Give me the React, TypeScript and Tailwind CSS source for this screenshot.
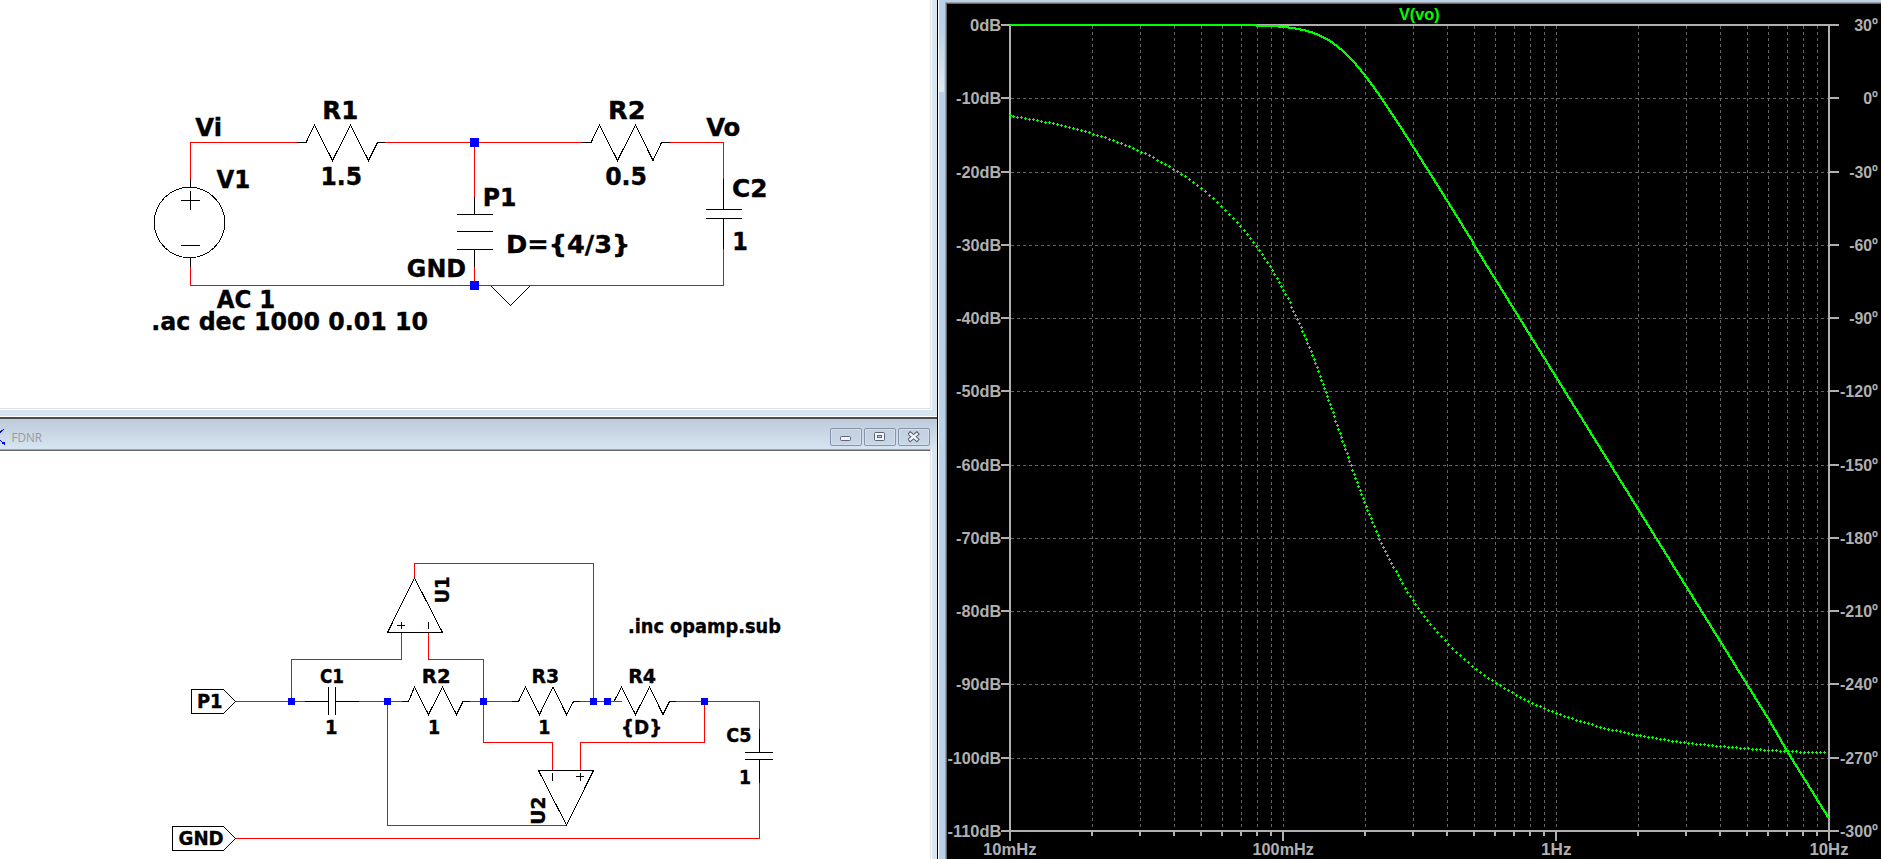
import React from "react";

type Pt = [number, number];

const SCHEMATIC_FONT = '"DejaVu Sans Condensed", "DejaVu Sans", sans-serif';
const PLOT_FONT = '"Liberation Sans", Arial, sans-serif';

let ctx: CanvasRenderingContext2D | null = null;

/** Fits a label so that its ink covers the span from x to x + w. */
function fit(text: string, font: string, x: number, w: number) {
  ctx = ctx || document.createElement("canvas").getContext("2d");
  if (!ctx) return { x, length: w };
  ctx.font = font;
  const m = ctx.measureText(text);
  const k = w / (m.actualBoundingBoxLeft + m.actualBoundingBoxRight);
  return { x: x + m.actualBoundingBoxLeft * k, length: m.width * k };
}

interface LabelProps {
  t: string;
  x: number;
  r: number;
  y: number;
  size: number;
  family?: string;
  weight?: string;
  fill?: string;
}

function Label({ t, x, r, y, size, family = SCHEMATIC_FONT, weight = "bold", fill = "#000" }: LabelProps) {
  const schematic = family === SCHEMATIC_FONT;
  const f = fit(t, `${schematic ? "condensed " : ""}${weight} ${size}px ${family}`, x, r - x);
  return (
    <text
      x={f.x}
      y={schematic ? y - 1 : y}
      textLength={f.length}
      lengthAdjust="spacingAndGlyphs"
      fontFamily={family}
      fontStretch={schematic ? "condensed" : "normal"}
      fontWeight={weight}
      fontSize={size}
      fill={fill}
      stroke={schematic ? fill : "none"}
      strokeWidth={0.35}
    >
      {t}
    </text>
  );
}

function UpLabel({ t, x, top, bottom, size }: { t: string; x: number; top: number; bottom: number; size: number }) {
  return (
    <g transform={`translate(${x} ${bottom}) rotate(-90)`}>
      <Label t={t} x={0} r={bottom - top} y={1} size={size} />
    </g>
  );
}

const Wire = ({ d }: { d: string }) => <path d={d} stroke="#ff0000" fill="none" shapeRendering="crispEdges" />;
const Part = ({ d }: { d: string }) => <path d={d} stroke="#000" fill="none" shapeRendering="crispEdges" />;
const Node = ({ x, y, s }: { x: number; y: number; s: number }) => (
  <rect x={x - s / 2} y={y - s / 2} width={s} height={s} fill="#0000ff" shapeRendering="crispEdges" />
);

function FilterSchematic() {
  return (
    <svg className="block" width="930" height="408" viewBox="0 0 930 408">
      <Wire d="M190.5 179V142.5H297M385 142.5H582M670 142.5H723.5V179M723.5 249V285.5H190.5V267M474.5 143V197M474.5 267V285" />
      <Part d="M190.5 179V187M190.5 258V267M181 200.5H200M190.5 191V210M181 245.5H200" />
      <circle cx="189.5" cy="222.5" r="35.2" fill="none" stroke="#000" shapeRendering="crispEdges" />
      <Part d="M297 142.5H306L314.5 125L332.5 160.5L350.5 125L368.5 160.5L377.5 142.5H385" />
      <Part d="M582 142.5H591L599.5 125L617.5 160.5L635.5 125L653 160.5L661.5 142.5H670" />
      <Part d="M474.5 197V214.5M457 214.5H493M457 231.5H493M457 249.5H493M474.5 249V267" />
      <Part d="M723.5 179V209.5M706 209.5H742M706 218.5H742M723.5 218V249" />
      <Part d="M491 286L510.5 305.5L530 286" />
      <Node x={474.5} y={142.5} s={9} />
      <Node x={474.5} y={285.5} s={9} />
      <Label t="Vi" x={195.3} r={220} y={137} size={25.5} />
      <Label t="R1" x={324.5} r={357.3} y={120} size={25.5} />
      <Label t="1.5" x={322.5} r={361} y={186} size={25.5} />
      <Label t="V1" x={216.5} r={249.3} y={189} size={25.5} />
      <Label t="AC 1" x={216.7} r={274.3} y={309} size={25.5} />
      <Label t=".ac dec 1000 0.01 10" x={153.4} r={427} y={331} size={25.5} />
      <Label t="GND" x={407.9} r={465} y={278} size={25.5} />
      <Label t="P1" x={484.9} r={515.5} y={207} size={25.5} />
      <Label t="D={4/3}" x={508.2} r={627.7} y={254} size={25.5} />
      <Label t="R2" x={610.2} r={643.3} y={120} size={25.5} />
      <Label t="0.5" x={606.2} r={646} y={186} size={25.5} />
      <Label t="Vo" x={706.2} r={739.5} y={137} size={25.5} />
      <Label t="C2" x={733} r={765.3} y={198} size={25.5} />
      <Label t="1" x={734.3} r={747} y={251} size={25.5} />
    </svg>
  );
}

function FdnrSchematic() {
  return (
    <svg className="block" width="930" height="408" viewBox="0 451 930 408">
      <Wire d="M236 701.5H305M359 701.5H402M470 701.5H512M580 701.5H600M676 701.5H759.5V729M759.5 783V838.5H235" />
      <Wire d="M414.5 578V563.5H593.5V701M401.5 633V659.5H291.5V701M428.5 633V659.5H483.5V742.5H552.5V770M704.5 701V742.5H580.5V770M566.5 825.5H387.5V701" />
      <Part d="M223.5 689.5H191.5V713.5H223.5L235.5 701.5ZM223.5 826.5H172.5V850.5H223.5L235.5 838.5Z" />
      <Part d="M305 701.5H328.5M328.5 687V715M335.5 687V715M335.5 701.5H359" />
      <Part d="M402 701.5H408.5L414.5 687L428.5 714.5L442.5 687L456.5 714.5L463 701.5H470" />
      <Part d="M512 701.5H518.5L525.5 687L539.5 714.5L553 687L566.5 714.5L573.5 701.5H580" />
      <Part d="M614 701.5L621.5 687L635.5 714.5L649.5 687L663 714.5L669.5 701.5H676" />
      <Wire d="M600 701.5H622" />
      <Part d="M759.5 729V752.5M745 752.5H773M745 759.5H773M759.5 759V783" />
      <Part d="M414.5 578L387.5 632.5H442.5ZM397 625.5H405M401.5 622V629M428.5 622V629" />
      <Part d="M538.5 770.5H593.5L566.5 825ZM552.5 773V781M576 776.5H584M580.5 773V781" />
      {[291.5, 387.5, 483.5, 593.5, 607.5, 704.5].map((x) => (
        <Node key={x} x={x} y={701.5} s={7} />
      ))}
      <Label t="P1" x={197.9} r={222} y={709} size={20} />
      <Label t="C1" x={319.9} r={343.5} y={683.5} size={20} />
      <Label t="1" x={327} r={337} y={734.5} size={20} />
      <Label t="R2" x={422.9} r={448.9} y={683.5} size={20} />
      <Label t="1" x={430} r={439.7} y={734.5} size={20} />
      <Label t="R3" x={532.5} r={558.5} y={683.5} size={20} />
      <Label t="1" x={540.2} r={549.9} y={734.5} size={20} />
      <Label t="R4" x={629.2} r={655.5} y={683.5} size={20} />
      <Label t="{D}" x={623} r={660.3} y={734.5} size={20} />
      <Label t="C5" x={726.3} r={751} y={743} size={20} />
      <Label t="1" x={741} r={750.6} y={784.5} size={20} />
      <Label t="GND" x={178.5} r={222.7} y={846} size={20} />
      <Label t=".inc opamp.sub" x={628.9} r={781} y={633.5} size={20} />
      <UpLabel t="U1" x={449} top={577} bottom={602.5} size={20} />
      <UpLabel t="U2" x={545} top={798} bottom={823.7} size={20} />
    </svg>
  );
}

const X0 = 1010;
const DECADE = 273.1;
const Y0 = 25;
const ROW = 73.27;
const toF = (x: number) => 0.01 * Math.pow(10, (x - X0) / DECADE);

function response(f: number) {
  const w = 2 * Math.PI * f;
  const re = 1 - 2 * w * w;
  const im = 2 * w - w * w * w;
  let phase = (-Math.atan2(im, re) * 180) / Math.PI;
  if (phase > 0) phase -= 360;
  return { db: -10 * Math.log10(re * re + im * im), phase };
}

/** Loss added by the finite op-amp gain near the top of the sweep, in pixels. */
function droop(f: number) {
  if (f < 0.5) return 0;
  if (f < 6) return 1;
  if (f < 7) return 1 + (f - 6) * 2;
  return 3.2;
}

const magnitudeY = (x: number) => {
  const f = toF(x);
  return Y0 - (response(f).db * ROW) / 10 + droop(f);
};
const phaseY = (x: number) => Math.min(752.5, Y0 + ((30 - response(toF(x)).phase) * ROW) / 30);

/** The trace as drawn by a square two-pixel pen, one step per pixel column. */
function magnitudePath() {
  let d = "";
  for (let x = 1011; x < 1829; x += 1) {
    const y = Math.round(magnitudeY(x));
    const next = Math.max(y + 1, Math.round(magnitudeY(x + 1)));
    d += `M${x - 1} ${y - 1}h2v${next - y + 1}h-2z`;
  }
  return d;
}

function phaseDots() {
  const dots: Pt[] = [];
  let lx = -99;
  let ly = -99;
  for (let x = X0; x <= 1827; x += 0.05) {
    const y = phaseY(x);
    if (Math.max(x - lx, Math.abs(y - ly)) >= 3.999) {
      dots.push([Math.floor(x), Math.floor(y)]);
      lx = x;
      ly = y;
    }
  }
  return dots.map(([x, y]) => `M${x - 1} ${y}h3v1h-3zM${x} ${y - 1}h1v3h-1z`).join("");
}

const GRID_X = [
  1092, 1140, 1174, 1201, 1222, 1241, 1257, 1271, 1283,
  1365, 1413, 1447, 1474, 1495, 1514, 1530, 1544, 1556,
  1638, 1686, 1720, 1747, 1768, 1787, 1803, 1817,
];
const ROWS = Array.from({ length: 12 }, (_, i) => i);
const DB_WIDTH = [31, 45, 45, 45, 45, 45, 45, 45, 45, 45, 53.5, 53.5];
const DEG_WIDTH = [23.5, 14.5, 28.5, 28.5, 28.5, 37.7, 37.7, 37.7, 37.7, 37.7, 37.7, 37.7];

function BodePlot() {
  const grey = "#b0b0b0";
  return (
    <svg className="block" width="934" height="855" viewBox="947 4 934 855">
      <g stroke="#646464" strokeDasharray="3 3" shapeRendering="crispEdges">
        {ROWS.slice(1, 11).map((i) => {
          const y = Math.round(Y0 + ROW * i) + 0.5;
          return <path key={i} d={`M1011 ${y}H1828`} />;
        })}
        {GRID_X.map((g) => (
          <path key={g} d={`M${g + 0.5} 26V830`} />
        ))}
      </g>
      <g fill={grey} shapeRendering="crispEdges">
        <rect x="1009" y="24" width="2" height="817" />
        <rect x="1828" y="24" width="2" height="817" />
        <rect x="1001" y="24" width="838" height="2" />
        <rect x="1001" y="830" width="838" height="2" />
        {ROWS.slice(1, 11).map((i) => {
          const y = Math.round(Y0 + ROW * i) - 1;
          return (
            <React.Fragment key={i}>
              <rect x="1001" y={y} width="8" height="2" />
              <rect x="1830" y={y} width="9" height="2" />
            </React.Fragment>
          );
        })}
        {GRID_X.map((g, i) => (
          <rect key={g} x={g - 1} y="832" width="2" height={i === 8 || i === 17 ? 9 : 4} />
        ))}
      </g>
      <path d={magnitudePath()} fill="#00ff00" shapeRendering="crispEdges" />
      <path d={phaseDots()} fill="#00ff00" shapeRendering="crispEdges" />
      {ROWS.map((i) => {
        const y = Math.round(Y0 + ROW * i) + 6;
        return (
          <React.Fragment key={i}>
            <Label t={`${i === 0 ? "" : "-"}${i * 10}dB`} x={1001 - DB_WIDTH[i]} r={1001} y={y} size={17} family={PLOT_FONT} fill={grey} />
            <Label t={`${30 - i * 30}º`} x={1877.7 - DEG_WIDTH[i]} r={1877.7} y={y} size={17} family={PLOT_FONT} fill={grey} />
          </React.Fragment>
        );
      })}
      <Label t="10mHz" x={984} r={1036} y={855} size={17} family={PLOT_FONT} fill={grey} />
      <Label t="100mHz" x={1253.5} r={1313.5} y={855} size={17} family={PLOT_FONT} fill={grey} />
      <Label t="1Hz" x={1542} r={1571} y={855} size={17} family={PLOT_FONT} fill={grey} />
      <Label t="10Hz" x={1810.5} r={1848} y={855} size={17} family={PLOT_FONT} fill={grey} />
      <Label t="V(vo)" x={1399} r={1439} y={19.5} size={17} family={PLOT_FONT} fill="#00ff00" />
    </svg>
  );
}

function CaptionButton({ name, children }: { name: string; children: React.ReactNode }) {
  return (
    <button
      aria-label={name}
      className="flex h-[18px] w-8 items-center justify-center rounded-[2px] border border-[#8793ab] bg-linear-to-b from-[#c3d0df] to-[#c9d6e5] shadow-[inset_0_0_0_1px_#d3deea]"
    >
      {children}
    </button>
  );
}

function TitleBar() {
  return (
    <div className="flex h-[30px] w-[937px] shrink-0 items-center justify-between bg-linear-to-b from-[#becbda] to-[#d7e4f2]">
      <svg className="block" width="60" height="30" viewBox="0 419 60 30">
        <path d="M0 432.5L4.5 428.5M0 440L5 444.5M2 442H4V443H2Z" stroke="#0000ff" fill="#0000ff" shapeRendering="crispEdges" />
        <Label t="FDNR" x={12.5} r={42} y={442} size={13} family={'"Open Sans", sans-serif'} weight="normal" fill="#999999" />
      </svg>
      <div className="flex gap-0.5 pt-[6px] pr-[7px]">
        <CaptionButton name="Minimize">
          <svg width="12" height="12" viewBox="0 0 12 12">
            <rect x="0.5" y="5.5" width="10" height="4" rx="1" fill="#f3f3f6" stroke="#5b6478" />
          </svg>
        </CaptionButton>
        <CaptionButton name="Restore">
          <svg width="12" height="12" viewBox="0 0 12 12">
            <rect x="0.5" y="1.5" width="10" height="8" rx="1" fill="#f3f3f6" stroke="#5b6478" />
            <rect x="3.5" y="4.5" width="4" height="2" fill="#c6d3e2" stroke="#5b6478" />
          </svg>
        </CaptionButton>
        <CaptionButton name="Close">
          <svg width="12" height="12" viewBox="0 0 12 12">
            <path d="M2.3 3L8.7 8.4M8.7 3L2.3 8.4" stroke="#5b6478" strokeWidth="4.4" strokeLinecap="square" />
            <path d="M2.3 3L8.7 8.4M8.7 3L2.3 8.4" stroke="#f3f3f6" strokeWidth="2.3" strokeLinecap="square" />
          </svg>
        </CaptionButton>
      </div>
    </div>
  );
}

export default function App() {
  return (
    <div className="flex h-[859px] w-[1881px] overflow-hidden bg-white">
      <div className="flex w-[938px] shrink-0 flex-col border-r border-black">
        <section className="flex h-[416px] w-[937px] shrink-0 flex-col border-r-[5px] border-b-[6px] border-[#d7e4f2] bg-white">
          <div className="h-[409px] w-[931px] border-r border-b border-[#e0e0e0]">
            <FilterSchematic />
          </div>
        </section>
        <div className="h-px bg-white" />
        <div className="h-[2px] bg-[#4c4c4c]" />
        <section className="flex w-[937px] flex-col">
          <TitleBar />
          <div className="flex">
            <div className="w-[931px] border-t border-r border-t-[#a0a0a0] border-r-[#e0e0e0]">
              <div className="border-t border-[#696969]">
                <FdnrSchematic />
              </div>
            </div>
            <div className="w-px bg-white" />
            <div className="w-[5px] bg-[#d7e4f2]" />
          </div>
        </section>
      </div>
      <div className="w-px bg-white" />
      <div className="flex w-[6px] shrink-0 flex-col bg-[#b9d1ea]">
        <div className="h-[92px] w-[5px] bg-linear-to-b from-[#b9d1ea] from-30% to-[#dfe9f4]" />
      </div>
      <div className="flex grow flex-col">
        <div className="h-[2px] bg-[#b9d1ea]" />
        <div className="border-t border-l border-[#a0a0a0]">
          <div className="border-t border-l border-[#696969] bg-black">
            <BodePlot />
          </div>
        </div>
      </div>
    </div>
  );
}
